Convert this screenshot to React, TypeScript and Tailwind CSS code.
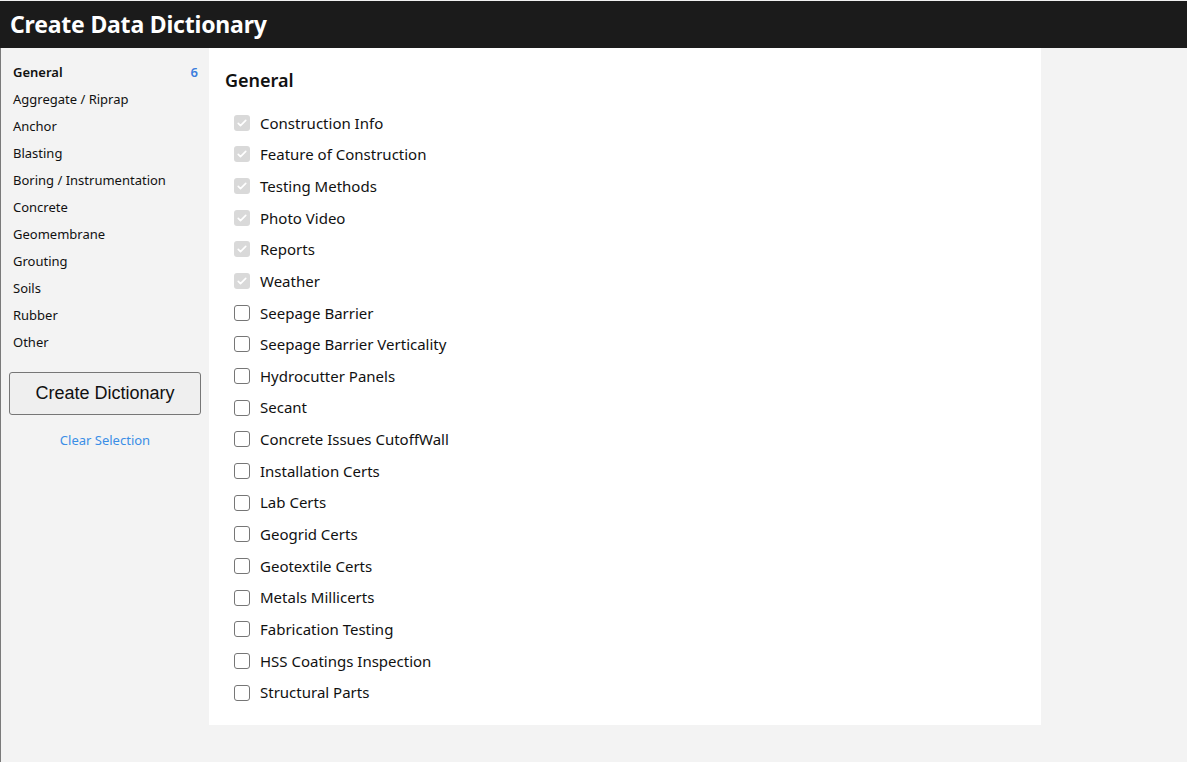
import React, { useState } from 'react';

const CATEGORIES = [
  'General',
  'Aggregate / Riprap',
  'Anchor',
  'Blasting',
  'Boring / Instrumentation',
  'Concrete',
  'Geomembrane',
  'Grouting',
  'Soils',
  'Rubber',
  'Other',
];

const ITEMS: { label: string; locked: boolean }[] = [
  { label: 'Construction Info', locked: true },
  { label: 'Feature of Construction', locked: true },
  { label: 'Testing Methods', locked: true },
  { label: 'Photo Video', locked: true },
  { label: 'Reports', locked: true },
  { label: 'Weather', locked: true },
  { label: 'Seepage Barrier', locked: false },
  { label: 'Seepage Barrier Verticality', locked: false },
  { label: 'Hydrocutter Panels', locked: false },
  { label: 'Secant', locked: false },
  { label: 'Concrete Issues CutoffWall', locked: false },
  { label: 'Installation Certs', locked: false },
  { label: 'Lab Certs', locked: false },
  { label: 'Geogrid Certs', locked: false },
  { label: 'Geotextile Certs', locked: false },
  { label: 'Metals Millicerts', locked: false },
  { label: 'Fabrication Testing', locked: false },
  { label: 'HSS Coatings Inspection', locked: false },
  { label: 'Structural Parts', locked: false },
];

function Box({ checked, disabled, onClick }: { checked: boolean; disabled: boolean; onClick: () => void }) {
  if (disabled) {
    return (
      <span className="w-4 h-4 rounded-[3px] bg-[#d9d9d9] flex items-center justify-center shrink-0">
        <svg viewBox="0 0 16 16" className="w-3 h-3">
          <path d="M3 8.5l3 3 7-7" fill="none" stroke="#ffffff" strokeWidth="2.2" strokeLinecap="round" strokeLinejoin="round" />
        </svg>
      </span>
    );
  }
  return (
    <button
      onClick={onClick}
      className={`w-4 h-4 rounded-[3px] border shrink-0 flex items-center justify-center ${checked ? 'bg-[#0075ff] border-[#0075ff]' : 'bg-white border-[#767676]'}`}
    >
      {checked && (
        <svg viewBox="0 0 16 16" className="w-3 h-3">
          <path d="M3 8.5l3 3 7-7" fill="none" stroke="#ffffff" strokeWidth="2.2" strokeLinecap="round" strokeLinejoin="round" />
        </svg>
      )}
    </button>
  );
}

export default function App() {
  const [selected, setSelected] = useState<Record<string, boolean>>({});
  const active = 'General';
  const count = ITEMS.filter(i => i.locked || selected[i.label]).length;

  return (
    <div className="min-h-[762px] flex flex-col bg-[#f3f3f3] border-t border-[#f0f0f0]" style={{ fontFamily: '"Noto Sans", "Open Sans", sans-serif' }}>
      <header className="h-[47px] bg-[#1b1b1b] flex items-center pl-[10px]">
        <h1 className="text-white text-[23px] font-bold tracking-[-0.2px] leading-none">Create Data Dictionary</h1>
      </header>

      <div className="flex flex-1 border-l border-[#7a7a7a]">
        <aside className="w-[208px] shrink-0 pt-[11px]">
          <nav className="flex flex-col">
            {CATEGORIES.map(c => (
              <div key={c} className="h-[27px] flex items-center justify-between pl-[12px] pr-[11px]">
                <span className={`text-[13px] text-[#111] ${c === active ? 'font-semibold' : ''}`}>{c}</span>
                {c === active && <span className="text-[13px] font-semibold text-[#3b7ddd]">{count}</span>}
              </div>
            ))}
          </nav>
          <div className="px-[8px] mt-[16px]">
            <button className="w-full h-[43px] bg-[#efefef] border border-[#767676] rounded-[3px] text-[18px] text-[#111]" style={{ fontFamily: '"Liberation Sans", Arial, sans-serif' }}>
              Create Dictionary
            </button>
          </div>
          <div className="text-center mt-[12px]">
            <button onClick={() => setSelected({})} className="text-[13px] text-[#3a8ee6]">Clear Selection</button>
          </div>
        </aside>

        <div className="self-start">
          <main className="w-[832px] bg-white pl-[16px] pt-[19px] pb-[17px]">
            <h2 className="text-[18px] font-semibold text-[#111] leading-[26px]">General</h2>
            <ul className="mt-[14px] pl-[9px]">
              {ITEMS.map(item => (
                <li key={item.label} className="h-[31.67px] flex items-center gap-[10px]">
                  <Box
                    checked={item.locked || !!selected[item.label]}
                    disabled={item.locked}
                    onClick={() => setSelected(s => ({ ...s, [item.label]: !s[item.label] }))}
                  />
                  <span className="text-[15px] text-[#111]">{item.label}</span>
                </li>
              ))}
            </ul>
          </main>
        </div>
      </div>
    </div>
  );
}
